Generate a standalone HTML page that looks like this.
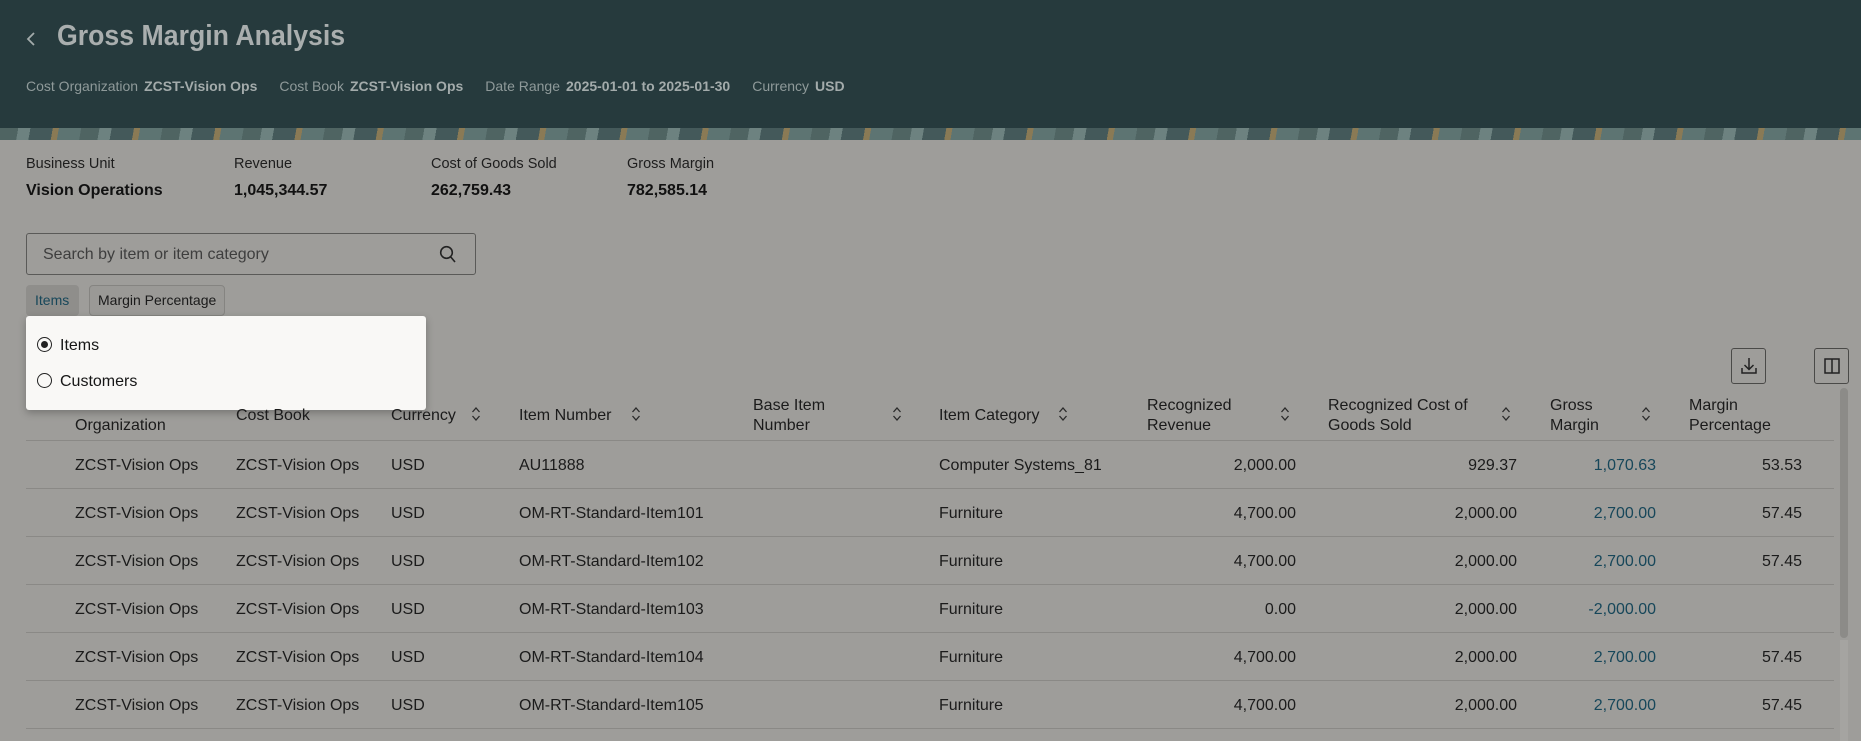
<!DOCTYPE html>
<html><head><meta charset="utf-8"><style>
*{margin:0;padding:0;box-sizing:border-box}
body{width:1861px;height:741px;overflow:hidden;background:#9e9d9a;font-family:"Liberation Sans",sans-serif;color:#161616;position:relative}
.abs{position:absolute;white-space:nowrap}
.hdr{position:absolute;left:0;top:0;width:1861px;height:128px;background:#263a3d}
.band{position:absolute;left:0;top:128px;width:1861px;height:12px;background:repeating-linear-gradient(100deg,#4f6462 0 18px,#6d8280 18px 30px,#44595a 30px 52px,#8a7a55 52px 58px,#5d7472 58px 80px)}
.sub{font-size:14px;color:#8f9a9a}
.sub b{color:#a3abab;margin-left:6px;margin-right:22px}
.lbl{font-size:14.5px;color:#1e1e1e}
.val{font-size:16px;font-weight:bold;color:#111}
.th{font-size:16px;color:#1b1b1b;line-height:20px}
.td{font-size:16px;color:#1b1b1b}
.r{text-align:right}
.lnk{color:#17475a}
.line{position:absolute;left:26px;width:1808px;height:1px;background:#8a8986}
.sort{position:absolute;width:10px;height:16px}
</style></head><body>
<div class="hdr"></div>
<div class="band"></div>
<svg class="abs" style="left:25px;top:31px" width="12" height="16"><path d="M9 2 L3 8 L9 14" stroke="#a3abab" stroke-width="1.8" fill="none"/></svg>
<div class="abs" style="left:57px;top:20px;font-size:29px;font-weight:bold;color:#a9aeae;transform:scaleX(.92);transform-origin:0 0">Gross Margin Analysis</div>
<div class="abs sub" style="left:26px;top:78px">Cost Organization<b>ZCST-Vision Ops</b>Cost Book<b>ZCST-Vision Ops</b>Date Range<b>2025-01-01 to 2025-01-30</b>Currency<b>USD</b></div>

<div class="abs lbl" style="left:26px;top:156px">Business Unit</div>
<div class="abs lbl" style="left:234px;top:156px">Revenue</div>
<div class="abs lbl" style="left:431px;top:156px">Cost of Goods Sold</div>
<div class="abs lbl" style="left:627px;top:156px">Gross Margin</div>
<div class="abs val" style="left:26px;top:182px">Vision Operations</div>
<div class="abs val" style="left:234px;top:182px">1,045,344.57</div>
<div class="abs val" style="left:431px;top:182px">262,759.43</div>
<div class="abs val" style="left:627px;top:182px">782,585.14</div>

<div class="abs" style="left:26px;top:233px;width:450px;height:42px;border:1px solid #5a5a58;border-radius:3px"></div>
<div class="abs" style="left:43px;top:246px;font-size:16px;color:#3e3e3e">Search by item or item category</div>
<svg class="abs" style="left:439px;top:245px" width="18" height="20"><circle cx="7.5" cy="7.5" r="5.8" stroke="#222" stroke-width="1.6" fill="none"/><path d="M11.8 12 L16 17" stroke="#222" stroke-width="1.6"/></svg>

<div class="abs" style="left:26px;top:285px;width:53px;height:31px;background:#8f8e8b;border-radius:4px"></div>
<div class="abs" style="left:35px;top:292px;font-size:14px;color:#17475a">Items</div>
<div class="abs" style="left:89px;top:285px;width:136px;height:31px;border:1px solid #858481;border-radius:4px;background:#9a9996"></div>
<div class="abs" style="left:98px;top:292px;font-size:14px;color:#1a1a1a">Margin Percentage</div>

<div class="abs" style="left:26px;top:316px;width:400px;height:94px;background:#f9f8f6;border-radius:3px;box-shadow:0 3px 8px rgba(0,0,0,.25)"></div>
<div class="abs" style="left:37px;top:337px;width:15px;height:15px;border:1.5px solid #222;border-radius:50%"></div>
<div class="abs" style="left:41px;top:341px;width:7px;height:7px;background:#222;border-radius:50%"></div>
<div class="abs" style="left:60px;top:337px;font-size:16px">Items</div>
<div class="abs" style="left:37px;top:373px;width:15px;height:15px;border:1.5px solid #222;border-radius:50%"></div>
<div class="abs" style="left:60px;top:373px;font-size:16px">Customers</div>

<div class="abs" style="left:1731px;top:348px;width:35px;height:36px;border:1px solid #4a4a48;border-radius:3px"></div>
<svg class="abs" style="left:1739px;top:356px" width="20" height="20"><path d="M10 2 V13 M5.5 9 L10 13.5 L14.5 9 M3 12 V17 H17 V12" stroke="#222" stroke-width="1.5" fill="none"/></svg>
<div class="abs" style="left:1814px;top:348px;width:35px;height:36px;border:1px solid #4a4a48;border-radius:3px"></div>
<svg class="abs" style="left:1823px;top:357px" width="18" height="18"><rect x="2" y="2" width="14" height="14" stroke="#222" stroke-width="1.5" fill="none"/><path d="M9 2 V16" stroke="#222" stroke-width="1.5"/></svg>

<div class="abs" style="left:1840px;top:388px;width:8px;height:250px;background:#8c8b88;border-radius:4px"></div>
<div class="abs" style="left:1840px;top:640px;width:8px;height:101px;background:#a5a4a1"></div>

<!-- header -->
<div class="abs th" style="left:75px;top:416px">Organization</div>
<div class="abs th" style="left:236px;top:406px">Cost Book</div>
<div class="abs th" style="left:391px;top:406px">Currency</div>
<div class="abs th" style="left:519px;top:406px">Item Number</div>
<div class="abs th" style="left:753px;top:396px">Base Item<br>Number</div>
<div class="abs th" style="left:939px;top:406px">Item Category</div>
<div class="abs th" style="left:1147px;top:396px">Recognized<br>Revenue</div>
<div class="abs th" style="left:1328px;top:396px">Recognized Cost of<br>Goods Sold</div>
<div class="abs th" style="left:1550px;top:396px">Gross<br>Margin</div>
<div class="abs th" style="left:1689px;top:396px">Margin<br>Percentage</div>
<div id="sorts"></div>
<div class="line" style="top:440px"></div>

<div id="rows"></div>
<script>
var s="";[471,631,892,1058,1280,1501,1641].forEach(function(x){
s+='<svg class="sort" style="left:'+x+'px;top:406px" viewBox="0 0 10 16"><path d="M1.5 6 L5 2 L8.5 6 M1.5 10 L5 14 L8.5 10" stroke="#2a2a2a" stroke-width="1.3" fill="none"/></svg>';});
document.getElementById("sorts").innerHTML=s;
var d=[["AU11888","Computer Systems_81","2,000.00","929.37","1,070.63","53.53"],
["OM-RT-Standard-Item101","Furniture","4,700.00","2,000.00","2,700.00","57.45"],
["OM-RT-Standard-Item102","Furniture","4,700.00","2,000.00","2,700.00","57.45"],
["OM-RT-Standard-Item103","Furniture","0.00","2,000.00","-2,000.00",""],
["OM-RT-Standard-Item104","Furniture","4,700.00","2,000.00","2,700.00","57.45"],
["OM-RT-Standard-Item105","Furniture","4,700.00","2,000.00","2,700.00","57.45"]];
var h="";
d.forEach(function(r,i){var t=457+i*47.9;
h+='<div class="abs td" style="left:75px;top:'+t+'px">ZCST-Vision Ops</div>'+
'<div class="abs td" style="left:236px;top:'+t+'px">ZCST-Vision Ops</div>'+
'<div class="abs td" style="left:391px;top:'+t+'px">USD</div>'+
'<div class="abs td" style="left:519px;top:'+t+'px">'+r[0]+'</div>'+
'<div class="abs td" style="left:939px;top:'+t+'px">'+r[1]+'</div>'+
'<div class="abs td r" style="right:'+(1861-1296)+'px;top:'+t+'px">'+r[2]+'</div>'+
'<div class="abs td r" style="right:'+(1861-1517)+'px;top:'+t+'px">'+r[3]+'</div>'+
'<div class="abs td r lnk" style="right:'+(1861-1656)+'px;top:'+t+'px">'+r[4]+'</div>'+
'<div class="abs td r" style="right:'+(1861-1802)+'px;top:'+t+'px">'+r[5]+'</div>'+
'<div class="line" style="top:'+(488+i*47.9)+'px"></div>';});
document.getElementById("rows").innerHTML=h;
</script>
</body></html>
